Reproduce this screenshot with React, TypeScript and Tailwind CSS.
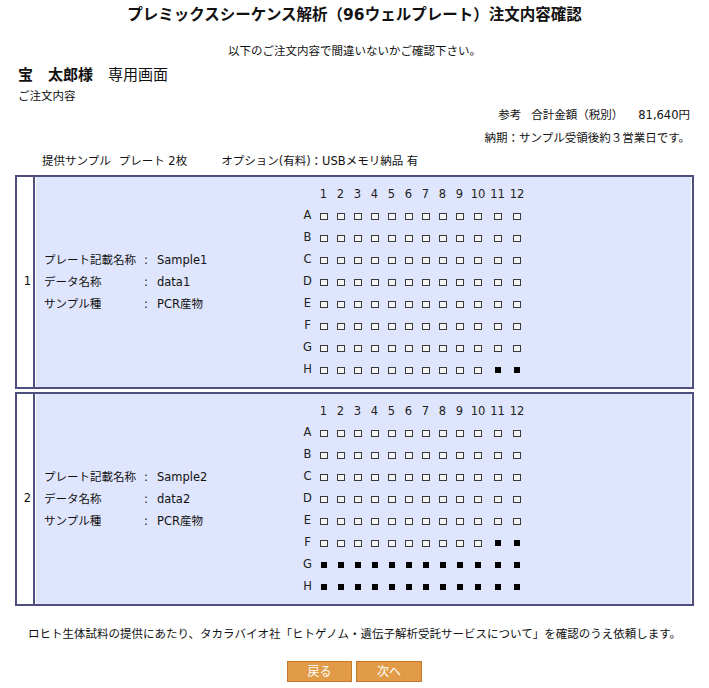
import React from 'react';

const COLS = ['1', '2', '3', '4', '5', '6', '7', '8', '9', '10', '11', '12'];
const COL_W = [
  'w-[17px]', 'w-[17px]', 'w-[17px]', 'w-[17px]', 'w-[17px]', 'w-[17px]',
  'w-[17px]', 'w-[17px]', 'w-[17px]', 'w-[20px]', 'w-[19px]', 'w-[20px]',
];
const ROWS = ['A', 'B', 'C', 'D', 'E', 'F', 'G', 'H'];

interface Plate {
  no: number;
  name: string;
  data: string;
  kind: string;
  filled: string[];
}

const plates: Plate[] = [
  { no: 1, name: 'Sample1', data: 'data1', kind: 'PCR産物', filled: ['H11', 'H12'] },
  {
    no: 2,
    name: 'Sample2',
    data: 'data2',
    kind: 'PCR産物',
    filled: ['F11', 'F12', ...COLS.map((c) => 'G' + c), ...COLS.map((c) => 'H' + c)],
  },
];

function Well({ on }: { on: boolean }) {
  if (on) return <span className="block w-[6px] h-[6px] bg-black" />;
  return <span className="block w-[8px] h-[7px] border border-[#3a3a3a] bg-[#f4f4f4]" />;
}

function PlateGrid({ filled }: { filled: string[] }) {
  return (
    <div className="flex flex-col text-[#222]">
      <div className="flex h-[21px] items-center">
        <div className="w-[15px]" />
        {COLS.map((c, i) => (
          <div key={c} className={`${COL_W[i]} text-center`}>{c}</div>
        ))}
      </div>
      {ROWS.map((r) => (
        <div key={r} className="flex h-[22px] items-center">
          <div className="w-[15px] text-center">{r}</div>
          {COLS.map((c, i) => (
            <div key={c} className={`${COL_W[i]} flex justify-center`}>
              <Well on={filled.includes(r + c)} />
            </div>
          ))}
        </div>
      ))}
    </div>
  );
}

function PlateBox({ plate }: { plate: Plate }) {
  const info = [
    ['プレート記載名称', plate.name],
    ['データ名称', plate.data],
    ['サンプル種', plate.kind],
  ];
  return (
    <div className="flex border-2 border-[#4f4f7f] bg-white">
      <div className="w-[16px] flex items-center justify-end pr-[2px]">{plate.no}</div>
      <div className="w-[2px] bg-[#4f4f7f]" />
      <div className="flex-1 mx-px flex bg-[#dfe5fc] pt-[7px] pb-[6px]">
        {/* 記載情報 */}
        <div className="w-[264px] pl-[8px] flex flex-col justify-center">
          {info.map(([label, value]) => (
            <div key={label} className="flex h-[22px] items-center">
              <span className="w-[100px]">{label}</span>
              <span className="w-[13px]">:</span>
              <span>{value}</span>
            </div>
          ))}
        </div>
        <PlateGrid filled={plate.filled} />
      </div>
    </div>
  );
}

export default function App() {
  return (
    <div className="w-[709px] min-h-[688px] bg-white text-[#111] text-[11.5px] font-['DejaVu_Sans','Noto_Sans_CJK_JP',sans-serif]">
      <div className="h-[32px] flex items-center justify-center text-[15.5px] font-bold">
        プレミックスシーケンス解析（96ウェルプレート）注文内容確認
      </div>

      <div className="mt-[10px] h-[20px] flex items-center justify-center">
        以下のご注文内容で間違いないかご確認下さい。
      </div>

      <div className="mt-[3px] h-[20px] flex items-center pl-[18px] text-[15px]">
        <span className="font-bold">宝　太郎様</span>
        <span className="ml-[15px]">専用画面</span>
      </div>

      <div className="mt-[3px] h-[18px] flex items-center pl-[18px]">ご注文内容</div>

      <div className="mt-[1px] h-[18px] flex items-center justify-end pr-[19px]">
        <span>参考</span>
        <span className="ml-[10px]">合計金額（税別）</span>
        <span className="ml-[15px]">81,640円</span>
      </div>

      <div className="mt-[5px] h-[18px] flex items-center justify-end pr-[19px]">
        納期：サンプル受領後約３営業日です。
      </div>

      <div className="mt-[5px] h-[18px] flex items-center pl-[42px]">
        <span>提供サンプル</span>
        <span className="ml-[8px]">プレート 2枚</span>
        <span className="ml-[34px]">オプション(有料)：USBメモリ納品 有</span>
      </div>

      {/* プレート一覧 */}
      <div className="mt-[4px] mx-[15px] flex flex-col gap-[3px]">
        {plates.map((p) => (
          <PlateBox key={p.no} plate={p} />
        ))}
      </div>

      <div className="mt-[20px] h-[18px] flex items-center justify-center">
        ロヒト生体試料の提供にあたり、タカラバイオ社「ヒトゲノム・遺伝子解析受託サービスについて」を確認のうえ依頼します。
      </div>

      <div className="mt-[17px] flex justify-center gap-[4px]">
        <button className="w-[65px] h-[21px] bg-[#e19b46] border border-[#c7782c] text-white text-[12px]">
          戻る
        </button>
        <button className="w-[66px] h-[21px] bg-[#e19b46] border border-[#c7782c] text-white text-[12px]">
          次へ
        </button>
      </div>
    </div>
  );
}
